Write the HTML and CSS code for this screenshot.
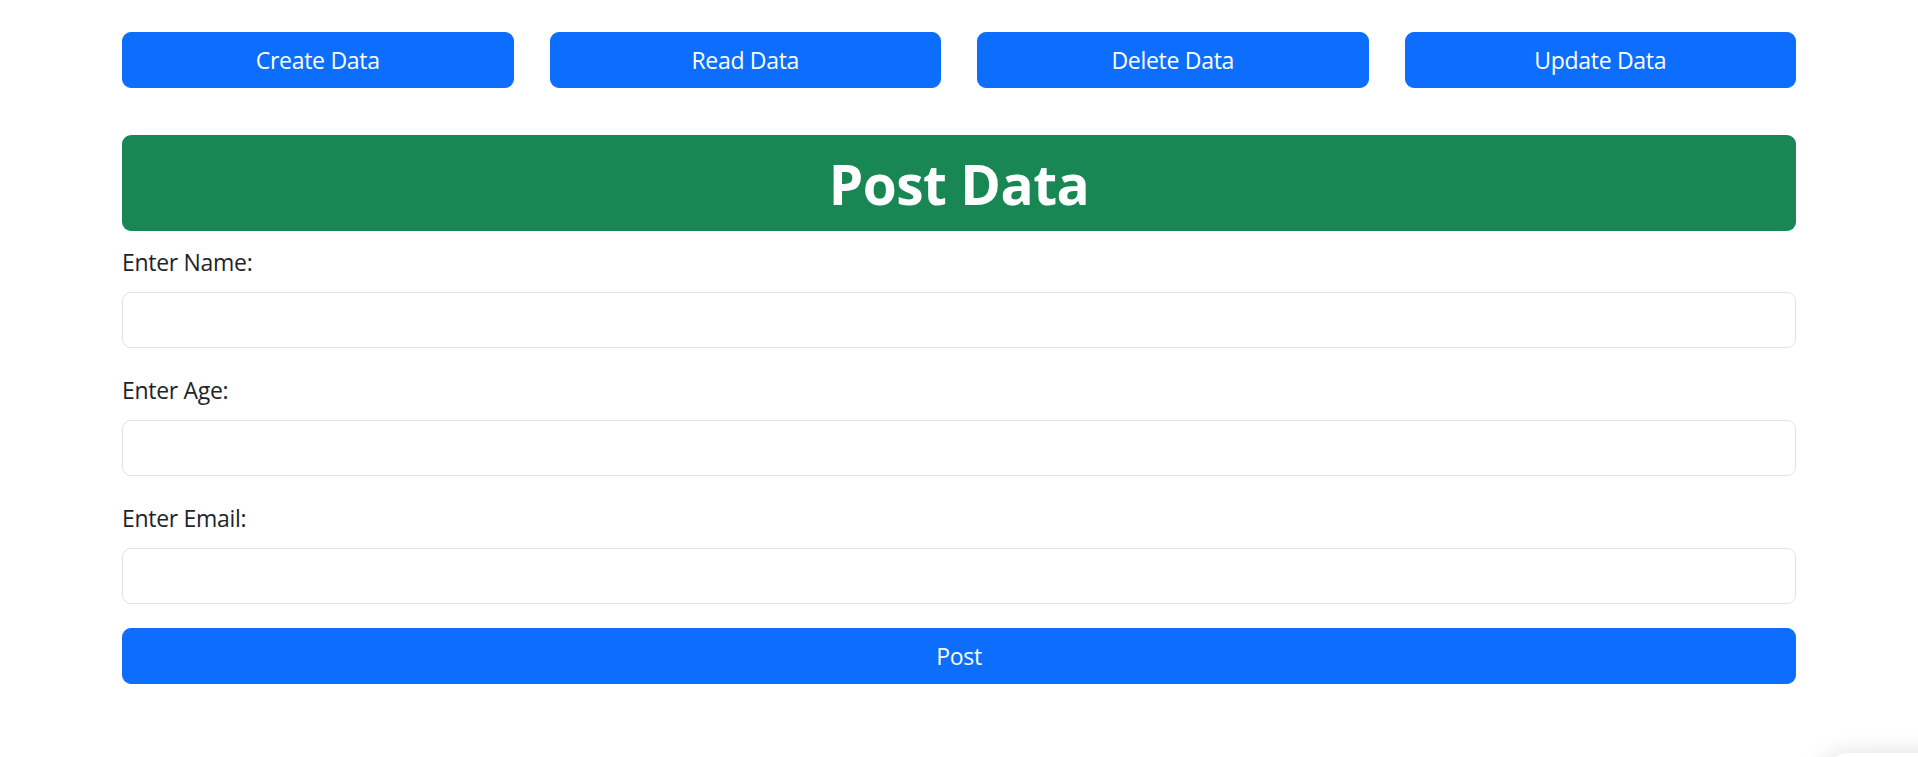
FILE: index.html
```html
<!DOCTYPE html>
<html lang="en">
<head>
<meta charset="utf-8">
<title>Post Data</title>
<link rel="stylesheet" href="styles.css">
</head>
<body>
<div class="container">
  <nav class="actions">
    <button class="btn">Create Data</button>
    <button class="btn">Read Data</button>
    <button class="btn">Delete Data</button>
    <button class="btn">Update Data</button>
  </nav>
  <h1 class="banner">Post Data</h1>
  <form class="form">
    <div class="field">
      <label class="label" for="name">Enter Name:</label>
      <input class="input" id="name" type="text">
    </div>
    <div class="field">
      <label class="label" for="age">Enter Age:</label>
      <input class="input" id="age" type="text">
    </div>
    <div class="field">
      <label class="label" for="email">Enter Email:</label>
      <input class="input" id="email" type="text">
    </div>
    <button class="btn btn-block" type="button">Post</button>
  </form>
</div>
<div class="corner-widget"></div>
</body>
</html>
```
FILE: styles.css
```css
* { box-sizing: border-box; }
html, body { margin: 0; padding: 0; }
body {
  font-family: "Open Sans", "Noto Sans", sans-serif;
  font-size: 24px;
  line-height: 1.5;
  color: #212529;
  background: #fff;
  overflow: hidden;
}
.container {
  width: 1674px;
  margin: 0 auto;
  padding-top: 32px;
}
.actions {
  display: flex;
  gap: 36px;
  margin-bottom: 47px;
}
.btn {
  flex: 1;
  height: 56px;
  border: 1.5px solid #0d6efd;
  background: #0d6efd;
  color: #fff;
  font-family: inherit;
  font-size: 23px;
  letter-spacing: -0.3px;
  border-radius: 9px;
  padding: 0 18px;
  cursor: pointer;
}
.banner {
  margin: 0 0 13px;
  background: #198754;
  color: #fff;
  text-align: center;
  font-size: 55px;
  font-weight: 700;
  line-height: 72px;
  padding: 13px 0 11px;
  border-radius: 9px;
  letter-spacing: -0.5px;
}
.form { display: flex; flex-direction: column; }
.field { display: flex; flex-direction: column; margin-bottom: 24px; }
.label {
  font-size: 23px;
  line-height: 36px;
  margin-bottom: 12px;
  letter-spacing: -0.3px;
}
.input {
  height: 56px;
  border: 1.5px solid #dee2e6;
  border-radius: 9px;
  font-family: inherit;
  font-size: 24px;
  padding: 0 18px;
  background: #fff;
}
.btn-block { width: 100%; flex: none; }
.corner-widget {
  position: fixed;
  right: -60px;
  bottom: -60px;
  width: 160px;
  height: 64px;
  border-radius: 32px;
  background: #fff;
  box-shadow: 0 0 24px rgba(0,0,0,0.12);
}
```
